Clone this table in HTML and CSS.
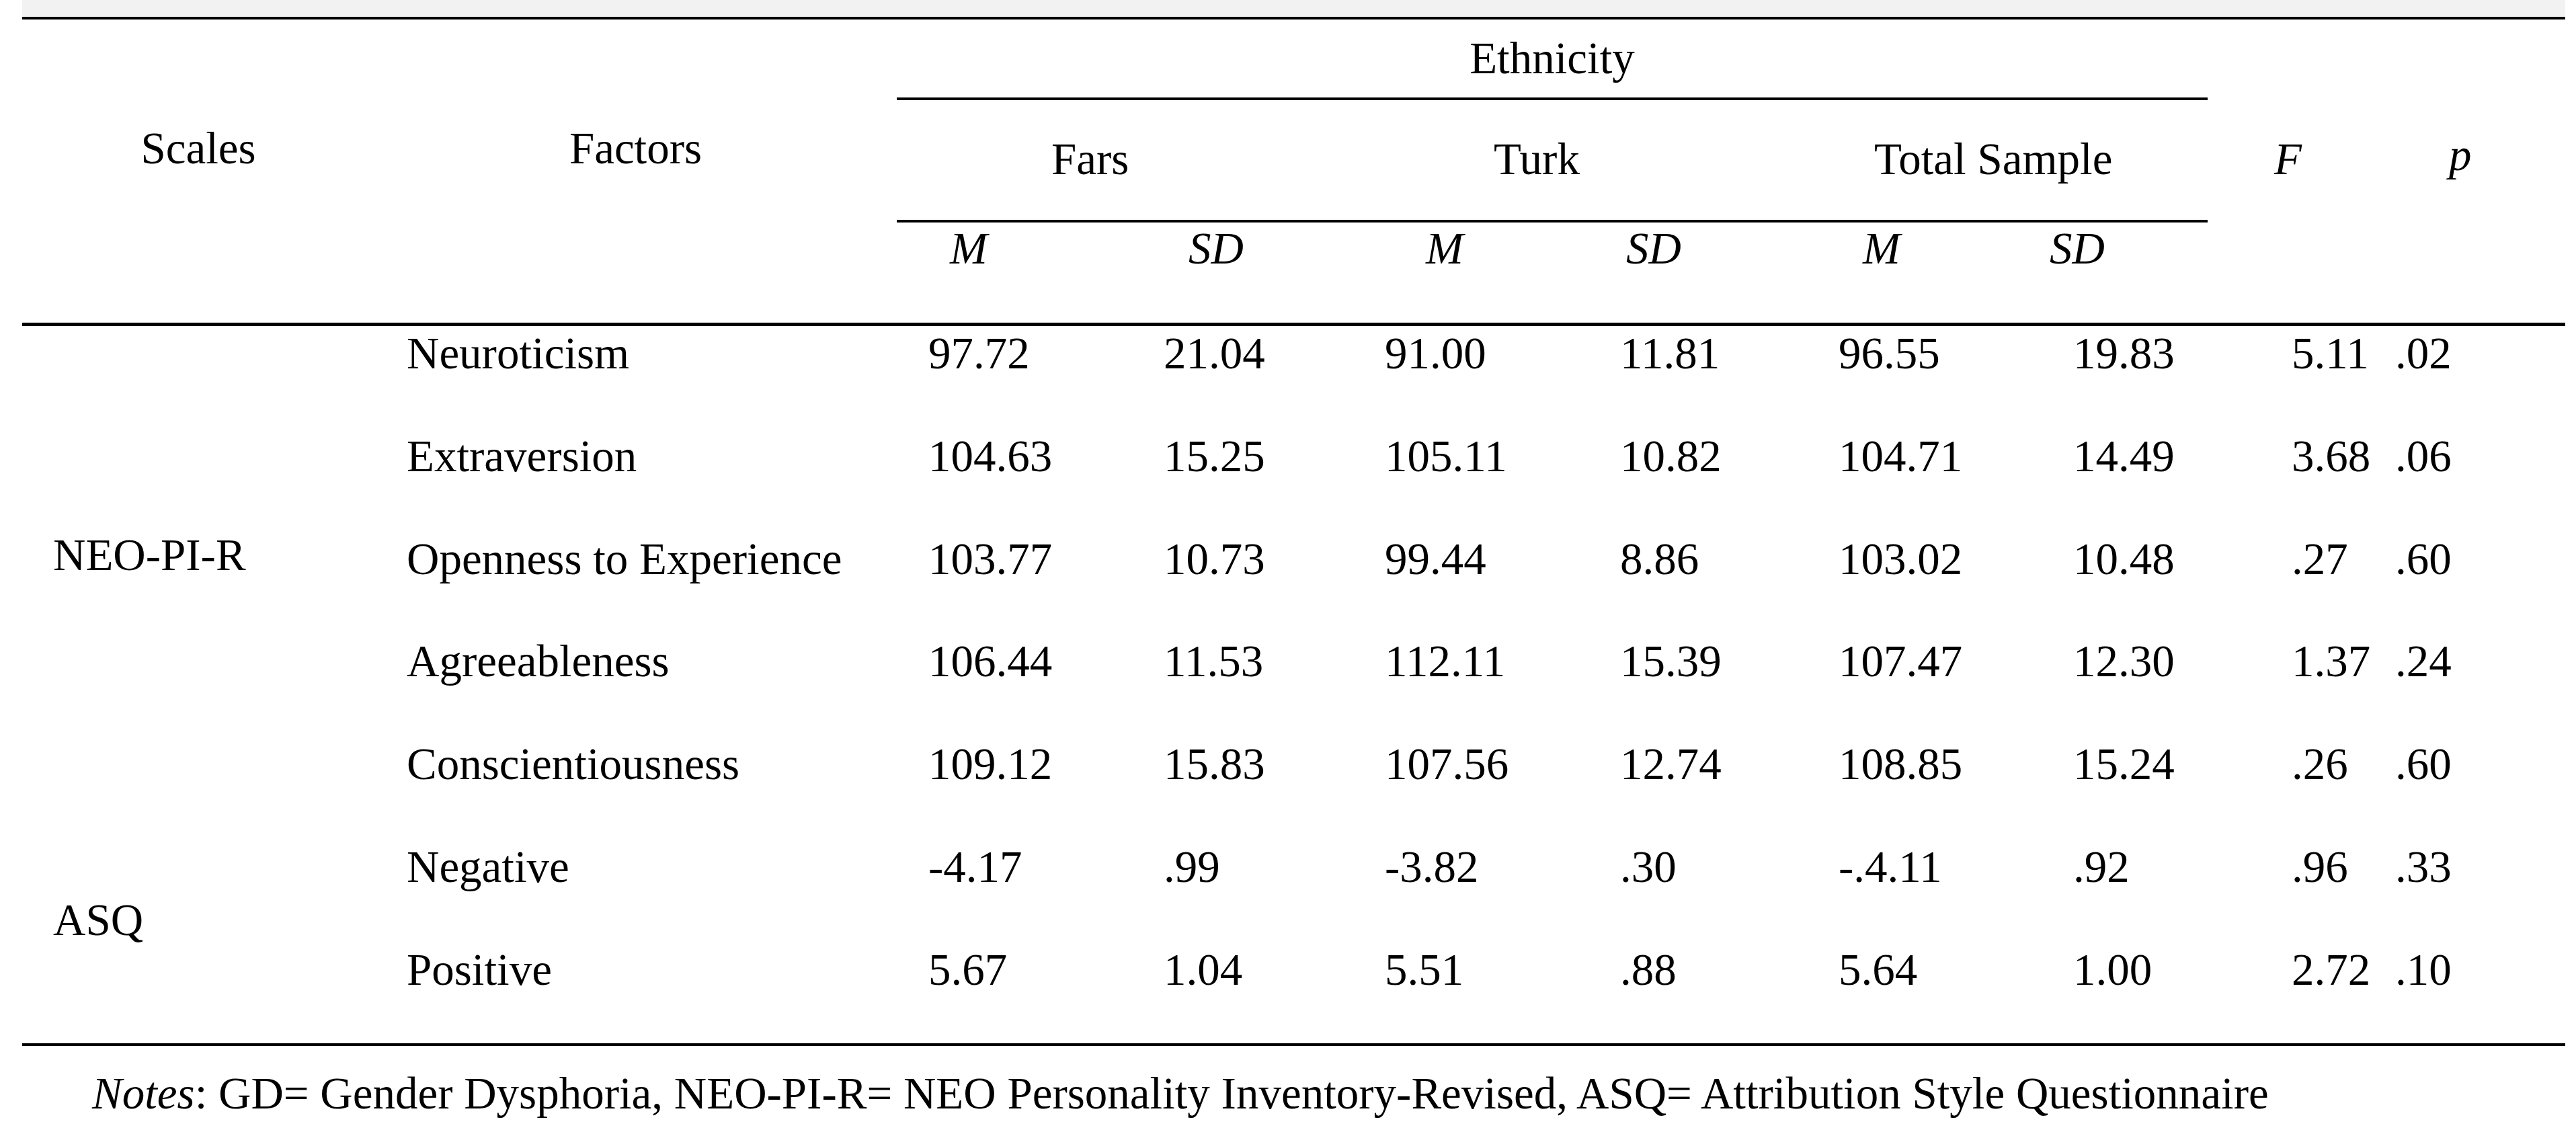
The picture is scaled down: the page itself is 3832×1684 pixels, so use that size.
FILE: index.html
```html
<!DOCTYPE html>
<html lang="en">
<head>
<meta charset="utf-8">
<title>Ethnicity table</title>
<link rel="stylesheet" href="styles.css">
</head>
<body>
<div class="page">
  <div class="band"></div>
  <div class="table">
    <div class="thead">
      <div class="h-scales">Scales</div>
      <div class="h-factors">Factors</div>
      <div class="h-eth">Ethnicity</div>
      <div class="rule rule-a"></div>
      <div class="g-fars">Fars</div>
      <div class="g-turk">Turk</div>
      <div class="g-total">Total Sample</div>
      <div class="rule rule-b"></div>
      <div class="h-f"><i>F</i></div>
      <div class="h-p"><i>p</i></div>
      <div class="sub s1"><i>M</i></div>
      <div class="sub s2"><i>SD</i></div>
      <div class="sub s3"><i>M</i></div>
      <div class="sub s4"><i>SD</i></div>
      <div class="sub s5"><i>M</i></div>
      <div class="sub s6"><i>SD</i></div>
    </div>
    <div class="tbody">
      <div class="scale scale-neo">NEO-PI-R</div>
      <div class="scale scale-asq">ASQ</div>

      <div class="factor">Neuroticism</div>
      <div class="num">97.72</div><div class="num">21.04</div><div class="num">91.00</div><div class="num">11.81</div><div class="num">96.55</div><div class="num">19.83</div><div class="num f">5.11</div><div class="num">.02</div>

      <div class="factor">Extraversion</div>
      <div class="num">104.63</div><div class="num">15.25</div><div class="num">105.11</div><div class="num">10.82</div><div class="num">104.71</div><div class="num">14.49</div><div class="num f">3.68</div><div class="num">.06</div>

      <div class="factor">Openness to Experience</div>
      <div class="num">103.77</div><div class="num">10.73</div><div class="num">99.44</div><div class="num">8.86</div><div class="num">103.02</div><div class="num">10.48</div><div class="num f">.27</div><div class="num">.60</div>

      <div class="factor">Agreeableness</div>
      <div class="num">106.44</div><div class="num">11.53</div><div class="num">112.11</div><div class="num">15.39</div><div class="num">107.47</div><div class="num">12.30</div><div class="num f">1.37</div><div class="num">.24</div>

      <div class="factor">Conscientiousness</div>
      <div class="num">109.12</div><div class="num">15.83</div><div class="num">107.56</div><div class="num">12.74</div><div class="num">108.85</div><div class="num">15.24</div><div class="num f">.26</div><div class="num">.60</div>

      <div class="factor">Negative</div>
      <div class="num">-4.17</div><div class="num">.99</div><div class="num">-3.82</div><div class="num">.30</div><div class="num">-.4.11</div><div class="num">.92</div><div class="num f">.96</div><div class="num">.33</div>

      <div class="factor">Positive</div>
      <div class="num">5.67</div><div class="num">1.04</div><div class="num">5.51</div><div class="num">.88</div><div class="num">5.64</div><div class="num">1.00</div><div class="num f">2.72</div><div class="num">.10</div>
    </div>
  </div>
  <p class="notes"><i>Notes</i>: GD= Gender Dysphoria, NEO-PI-R= NEO Personality Inventory-Revised, ASQ= Attribution Style Questionnaire</p>
</div>
</body>
</html>
```

FILE: styles.css
```css
html, body {
  margin: 0;
  padding: 0;
  background: #ffffff;
}

body {
  font-family: "Liberation Serif", "Times New Roman", serif;
  font-size: 67px;
  line-height: 77px;
  color: #000000;
  width: 3832px;
  height: 1684px;
  overflow: hidden;
}

.page {
  margin-left: 33px;
  width: 3783px;
}

.band {
  height: 25px;
  background: #f2f2f2;
}

.table {
  border-top: 4px solid #000;
  border-bottom: 4px solid #000;
}

.thead,
.tbody {
  display: grid;
  grid-template-columns: 524px 777px 350px 329px 350px 325px 349px 247px 232px 300px;
}

.thead {
  grid-template-rows: 116px 4px 178px 4px 149px;
  border-bottom: 5px solid #000;
}

.thead i,
.notes i {
  font-style: italic;
}

.h-scales {
  grid-column: 1;
  grid-row: 1 / 6;
  padding-top: 153px;
  text-align: center;
}

.h-factors {
  grid-column: 2;
  grid-row: 1 / 6;
  padding-top: 153px;
  text-align: center;
}

.h-eth {
  grid-column: 3 / 9;
  grid-row: 1;
  padding-top: 19px;
  text-align: center;
}

.rule {
  grid-column: 3 / 9;
  background: #000;
}

.rule-a { grid-row: 2; }
.rule-b { grid-row: 4; }

.g-fars,
.g-turk,
.g-total {
  grid-row: 3;
  padding-top: 49px;
}

.g-fars { grid-column: 3 / 5; padding-left: 230px; }
.g-turk { grid-column: 5 / 7; padding-left: 209px; }
.g-total { grid-column: 7 / 9; padding-left: 100px; }

.h-f {
  grid-column: 9;
  grid-row: 1 / 6;
  padding-top: 169px;
  padding-left: 99px;
}

.h-p {
  grid-column: 10;
  grid-row: 1 / 6;
  padding-top: 163px;
  padding-left: 127px;
}

.sub {
  grid-row: 5;
}

.s1 { grid-column: 3; padding-left: 79px; }
.s2 { grid-column: 4; padding-left: 84px; }
.s3 { grid-column: 5; padding-left: 108px; }
.s4 { grid-column: 6; padding-left: 56px; }
.s5 { grid-column: 7; padding-left: 83px; }
.s6 { grid-column: 8; padding-left: 12px; }

.tbody {
  padding-top: 2px;
  grid-template-rows: repeat(6, 152.75px) 148.5px;
}

.scale {
  grid-column: 1;
  align-self: start;
  padding-left: 46px;
}

.scale-neo {
  grid-row: 1 / span 5;
  padding-top: 300px;
}

.scale-asq {
  grid-row: 6 / span 2;
  padding-top: 79px;
}

.factor {
  padding-left: 48px;
  white-space: nowrap;
}

.num {
  padding-left: 47px;
  white-space: nowrap;
}

.num.f {
  padding-left: 125px;
}

.notes {
  margin: 32px 0 0 0;
  padding-left: 104px;
  white-space: nowrap;
}
```
